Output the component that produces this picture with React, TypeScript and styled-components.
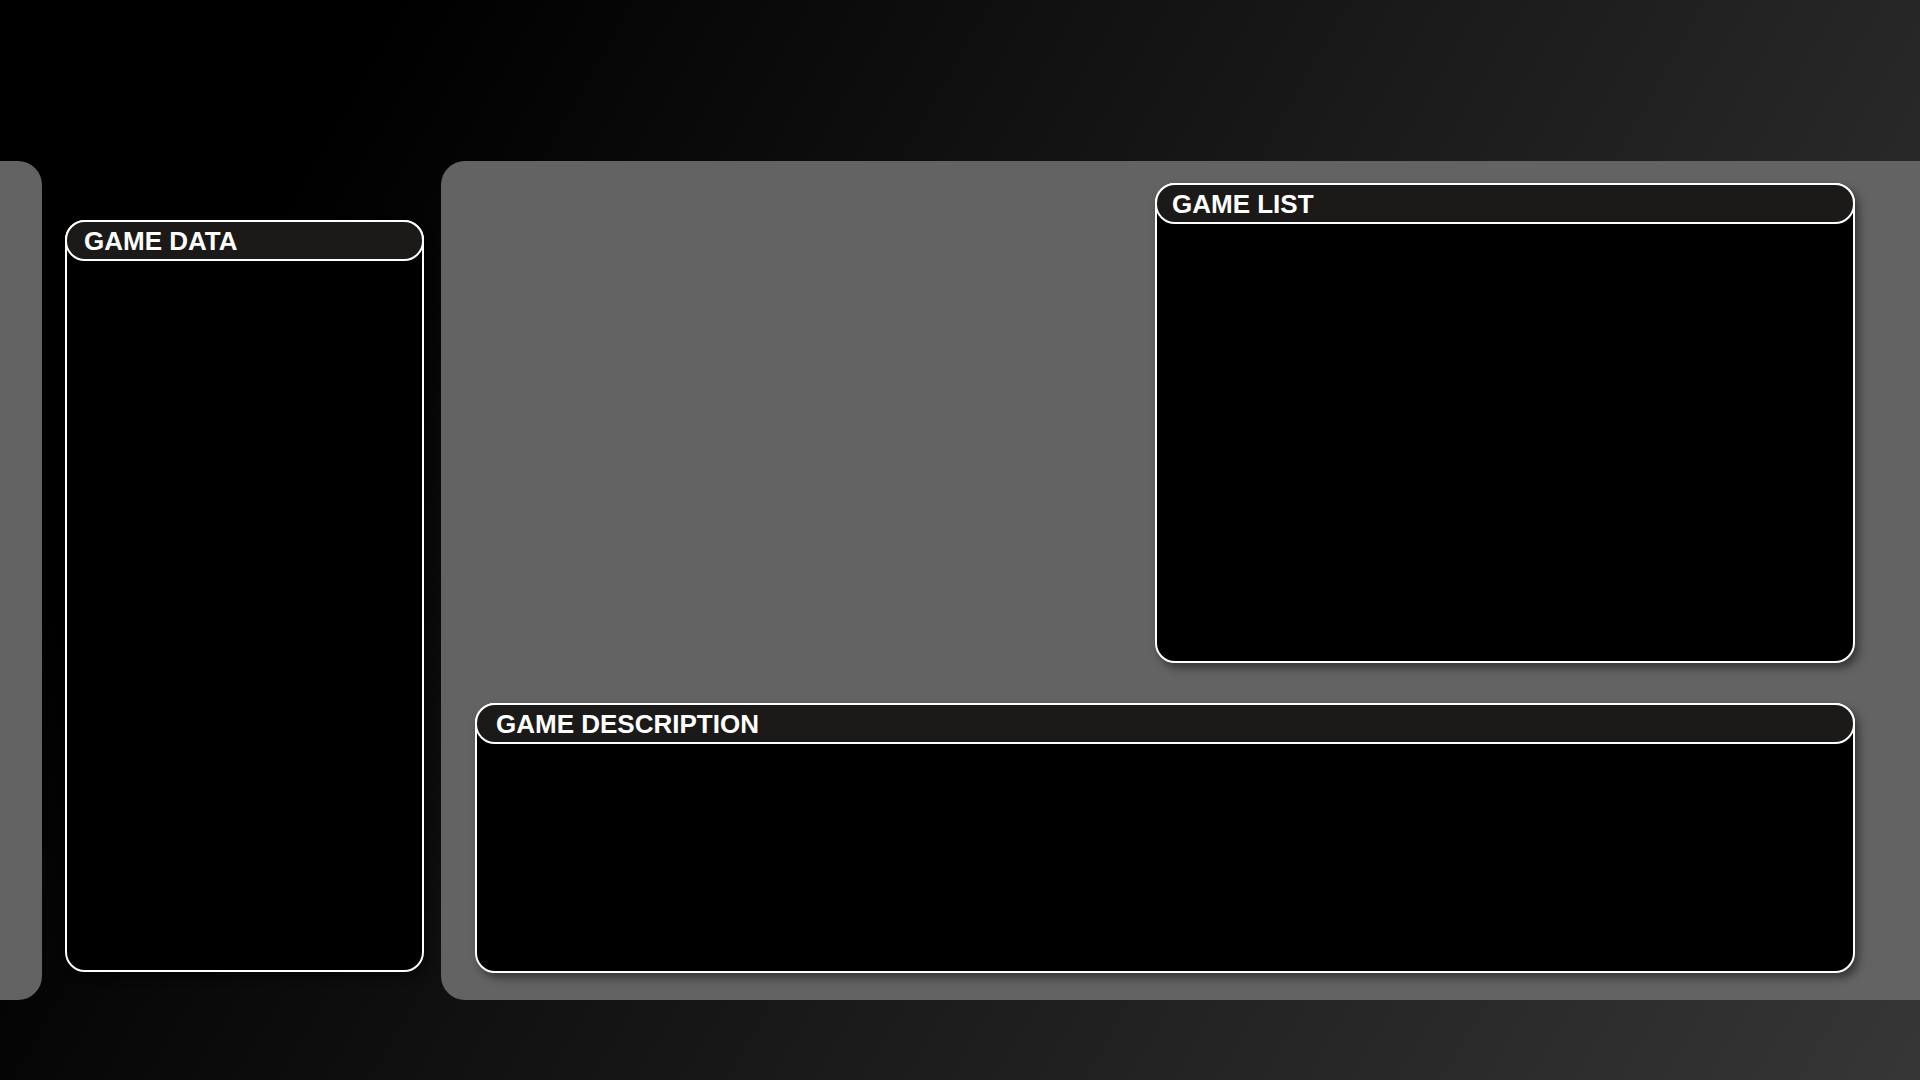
import { createGlobalStyle, styled } from 'styled-components';

const GlobalStyle = createGlobalStyle`
  html, body {
    margin: 0;
    padding: 0;
  }
  body {
    background: linear-gradient(120deg, #000 15.7%, #363636 100%);
    min-height: 100vh;
    font-family: "Liberation Sans", Arial, sans-serif;
  }
  * {
    box-sizing: border-box;
  }
`;

const Screen = styled.div`
  display: flex;
  align-items: stretch;
  height: 100vh;
  padding: 161px 0 80px;
`;

// grey strip peeking in on the left edge
const SideStrip = styled.div`
  width: 42px;
  flex-shrink: 0;
  background-color: #636363;
  border-radius: 0 24px 24px 0;
`;

const DataColumn = styled.div`
  display: flex;
  width: 359px;
  flex-shrink: 0;
  margin: 59px 17px 28px 23px;
`;

const MainPanel = styled.div`
  flex: 1;
  display: flex;
  flex-direction: column;
  gap: 40px;
  padding: 22px 65px 27px 34px;
  background-color: #636363;
  border-radius: 24px 0 0 24px;
`;

const Box = styled.section<{ $width?: string; $height?: string }>`
  display: flex;
  flex-direction: column;
  width: ${(p) => p.$width || '100%'};
  height: ${(p) => p.$height || '100%'};
  align-self: flex-end;
  background-color: #000;
  border: 2px solid #fff;
  border-radius: 20px;
  box-shadow: 4px 5px 8px rgba(0, 0, 0, 0.45);
`;

const BoxHeader = styled.h2<{ $indent: number }>`
  display: flex;
  align-items: center;
  height: 41px;
  margin: -2px -2px 0;
  padding: 0 0 0 ${(p) => p.$indent}px;
  background-color: #1b1a18;
  border: 2px solid #fff;
  border-radius: 20px;
  color: #fff;
  font-family: "Liberation Sans", Arial, sans-serif;
  font-size: 26px;
  font-weight: 700;
  line-height: 1;
`;

const BoxBody = styled.div`
  flex: 1;
`;

export default function App() {
  return (
    <>
      <GlobalStyle />
      <Screen>
        <SideStrip />
        <DataColumn>
          <Box>
            <BoxHeader $indent={17}>GAME DATA</BoxHeader>
            <BoxBody />
          </Box>
        </DataColumn>
        <MainPanel>
          <Box $width="700px" $height="480px">
            <BoxHeader $indent={15}>GAME LIST</BoxHeader>
            <BoxBody />
          </Box>
          <Box $height="270px">
            <BoxHeader $indent={19}>GAME DESCRIPTION</BoxHeader>
            <BoxBody />
          </Box>
        </MainPanel>
      </Screen>
    </>
  );
}
